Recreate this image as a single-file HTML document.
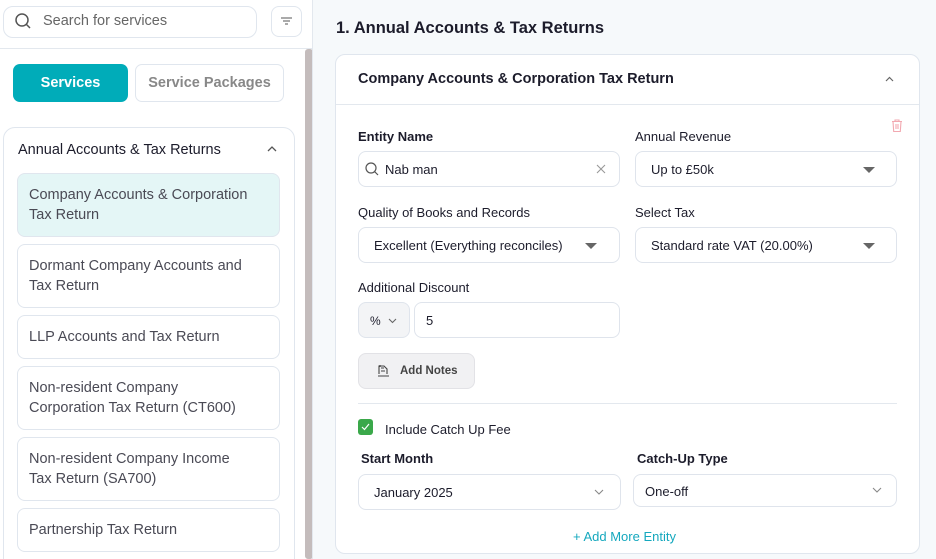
<!DOCTYPE html>
<html><head><style>
*{box-sizing:border-box;margin:0;padding:0}
body{width:936px;height:559px;overflow:hidden;background:#f6f9fb;font-family:"Liberation Sans",sans-serif;color:#1c1c2b;position:relative}
.a{position:absolute}
.lp{left:0;top:0;width:313px;height:559px;background:#fff;border-right:1px solid #e3e8ee;overflow:hidden}
.box{border:1px solid #e0e6ee;border-radius:8px;background:#fff}
.item{position:absolute;left:17px;width:263px;border:1px solid #e0e6ee;border-radius:8px;padding:11px 11px 9px;font-size:14.5px;line-height:20px;color:#4a4a55;white-space:nowrap}
.lbl{position:absolute;font-size:13px;font-weight:bold;color:#1c1c2b}
.lbl.n{font-weight:normal}
.inp{position:absolute;border:1px solid #dfe4ec;border-radius:8px;background:#fff;font-size:13px;display:flex;align-items:center;padding-left:15px;padding-top:1px}
.tri{position:absolute;right:21px;top:15px;width:0;height:0;border-left:6px solid transparent;border-right:6px solid transparent;border-top:6px solid #666}
</style></head><body>
<div class="a lp">
  <div class="a box" style="left:3px;top:6px;width:254px;height:32px;border-radius:10px"></div>
  <svg class="a" style="left:14px;top:12px" width="18" height="18" viewBox="0 0 18 18"><circle cx="8" cy="8" r="6" fill="none" stroke="#555" stroke-width="1.5"/><path d="M12.5 12.5L16 16" stroke="#555" stroke-width="1.5"/></svg>
  <div class="a" style="left:43px;top:13px;font-size:14.5px;color:#666">Search for services</div>
  <div class="a box" style="left:271px;top:6px;width:31px;height:31px;border-radius:8px"></div>
  <svg class="a" style="left:280px;top:15px" width="13" height="12"><path d="M1 3h11M3 6h7M5 9h3" stroke="#777" stroke-width="1.3"/></svg>
  <div class="a" style="left:0;top:48px;width:313px;height:1px;background:#e3e8ee"></div>
  <div class="a" style="left:305px;top:49px;width:8px;height:510px;background:#c4bcbc;border-radius:3px"></div>
  <div class="a" style="left:13px;top:64px;width:115px;height:38px;background:#00acb9;border-radius:7px;color:#fff;font-weight:bold;font-size:14.5px;text-align:center;line-height:38px">Services</div>
  <div class="a box" style="left:135px;top:64px;width:149px;height:38px;border-radius:7px;color:#888;font-weight:bold;font-size:14.5px;text-align:center;line-height:36px">Service Packages</div>
  <div class="a box" style="left:3px;top:127px;width:292px;height:450px;border-radius:12px"></div>
  <div class="a" style="left:18px;top:142px;font-size:14.5px;color:#1c1c2b">Annual Accounts &amp; Tax Returns</div>
  <svg class="a" style="left:267px;top:145px" width="10" height="8"><path d="M1 6l4-4 4 4" fill="none" stroke="#555" stroke-width="1.3"/></svg>
  <div class="item" style="top:173px;height:64px;background:#e4f6f6">Company Accounts &amp; Corporation<br>Tax Return</div>
  <div class="item" style="top:244px;height:64px">Dormant Company Accounts and<br>Tax Return</div>
  <div class="item" style="top:315px;height:44px">LLP Accounts and Tax Return</div>
  <div class="item" style="top:366px;height:64px">Non-resident Company<br>Corporation Tax Return (CT600)</div>
  <div class="item" style="top:437px;height:64px">Non-resident Company Income<br>Tax Return (SA700)</div>
  <div class="item" style="top:508px;height:44px">Partnership Tax Return</div>
</div>
<div class="a" style="left:336px;top:19px;font-size:16.5px;font-weight:bold">1. Annual Accounts &amp; Tax Returns</div>
<div class="a box" style="left:335px;top:54px;width:585px;height:500px;border-radius:10px"></div>
<div class="a" style="left:358px;top:71px;font-size:14.5px;font-weight:bold">Company Accounts &amp; Corporation Tax Return</div>
<svg class="a" style="left:885px;top:76px" width="9" height="6"><path d="M1 5l3.5-3.5L8 5" fill="none" stroke="#666" stroke-width="1.2"/></svg>
<div class="a" style="left:336px;top:104px;width:583px;height:1px;background:#e3e8ee"></div>
<svg class="a" style="left:891px;top:119px" width="12" height="14"><path d="M1 2.5h10M4 2.5V1h4v1.5M2 2.5l.7 10h6.6l.7-10M5 5v5M7 5v5" fill="none" stroke="#f2a8b0" stroke-width="1.1"/></svg>
<div class="lbl" style="left:358px;top:129px">Entity Name</div>
<div class="lbl n" style="left:635px;top:129px">Annual Revenue</div>
<div class="inp" style="left:358px;top:151px;width:262px;height:36px;padding-left:26px">Nab man</div>
<svg class="a" style="left:364px;top:161px" width="16" height="16"><circle cx="7" cy="7" r="5" fill="none" stroke="#555" stroke-width="1.2"/><path d="M10.5 10.5L14 14" stroke="#555" stroke-width="1.2"/></svg>
<svg class="a" style="left:596px;top:164px" width="10" height="10"><path d="M1 1l8 8M9 1L1 9" stroke="#999" stroke-width="1.1"/></svg>
<div class="inp" style="left:635px;top:151px;width:262px;height:36px">Up to £50k<div class="tri"></div></div>
<div class="lbl n" style="left:358px;top:205px">Quality of Books and Records</div>
<div class="lbl n" style="left:635px;top:205px">Select Tax</div>
<div class="inp" style="left:358px;top:227px;width:262px;height:36px">Excellent (Everything reconciles)<div class="tri" style="right:22px"></div></div>
<div class="inp" style="left:635px;top:227px;width:262px;height:36px">Standard rate VAT (20.00%)<div class="tri"></div></div>
<div class="lbl n" style="left:358px;top:280px">Additional Discount</div>
<div class="inp" style="left:358px;top:302px;width:52px;height:36px;background:#f3f4f6;padding-left:11px;font-size:12px">% <svg style="margin-left:7px" width="9" height="6"><path d="M1 1l3.5 3.5L8 1" fill="none" stroke="#666" stroke-width="1.1"/></svg></div>
<div class="inp" style="left:414px;top:302px;width:206px;height:36px;padding-left:11px">5</div>
<div class="a" style="left:358px;top:353px;width:117px;height:36px;background:#f1f1f3;border:1px solid #e2e2e6;border-radius:8px;font-size:11.5px;font-weight:bold;color:#444;line-height:35px;padding-left:41px">Add Notes</div>
<svg class="a" style="left:376px;top:363px" width="15" height="15"><path d="M2 13h11M3 11V3h5l3 3v5M5 5h3M5 8h4M4 2v2" fill="none" stroke="#444" stroke-width="1.1"/></svg>
<div class="a" style="left:358px;top:403px;width:539px;height:1px;background:#e3e8ee"></div>
<div class="a" style="left:358px;top:419px;width:15px;height:16px;background:#3aa84a;border-radius:3px"></div>
<svg class="a" style="left:361px;top:422px" width="9" height="9"><path d="M1 5l2.5 2.5L8 2" fill="none" stroke="#fff" stroke-width="1.2"/></svg>
<div class="lbl n" style="left:385px;top:422px">Include Catch Up Fee</div>
<div class="lbl" style="left:361px;top:451px">Start Month</div>
<div class="lbl" style="left:637px;top:451px">Catch-Up Type</div>
<div class="inp" style="left:358px;top:474px;width:263px;height:36px">January 2025<svg class="a" style="right:16px;top:14px" width="10" height="6"><path d="M1 1l4 4 4-4" fill="none" stroke="#888" stroke-width="1.1"/></svg></div>
<div class="inp" style="left:633px;top:474px;width:264px;height:33px;padding-left:11px">One-off<svg class="a" style="right:14px;top:12px" width="10" height="6"><path d="M1 1l4 4 4-4" fill="none" stroke="#888" stroke-width="1.1"/></svg></div>
<div class="a" style="left:573px;top:529px;font-size:13px;color:#15a8be">+ Add More Entity</div>
</body></html>
